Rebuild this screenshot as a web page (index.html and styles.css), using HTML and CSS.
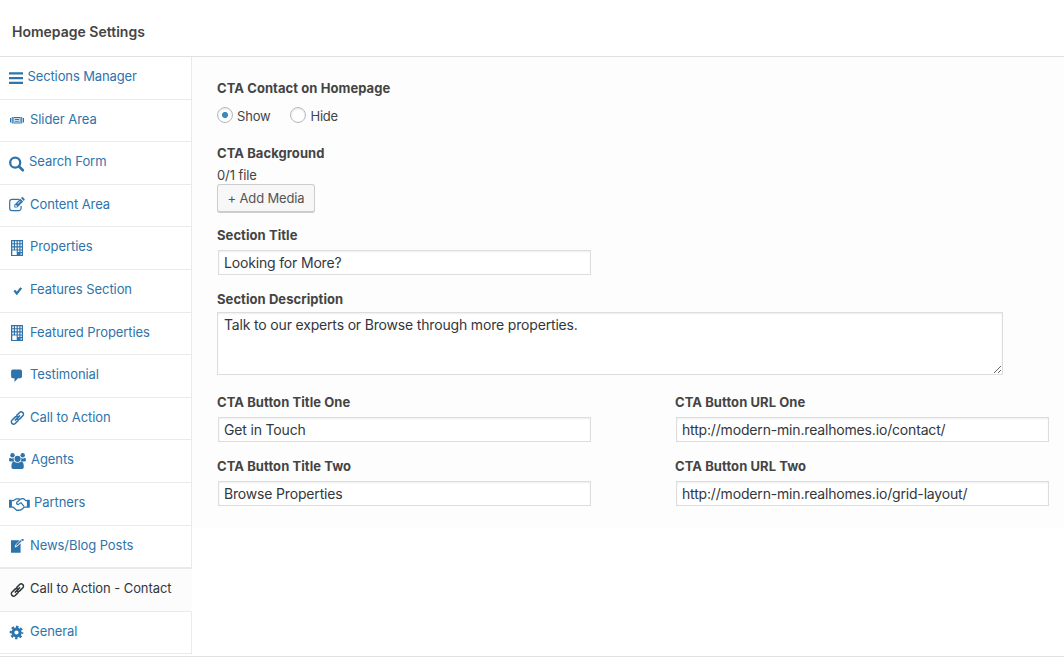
FILE: index.html
```html
<!DOCTYPE html>
<html lang="en">
<head>
<meta charset="utf-8">
<title>Homepage Settings</title>
<link rel="stylesheet" href="styles.css">
</head>
<body>
<svg class="defs" aria-hidden="true">
  <symbol id="link" viewBox="0 0 14 14"><g transform="rotate(-45 7 7)" fill="none" stroke="currentColor" stroke-width="1.500"><path d="M6.300 9.300H1.600Q-.6 9.300-.6 7t2.200-2.300h4Q7.900 4.700 7.900 7M7.700 4.700h4.700Q14.600 4.700 14.600 7t-2.200 2.300h-4Q6.100 9.300 6.100 7"/><path d="M3.300 7h7.400"/></g></symbol>
  <symbol id="building" viewBox="0 0 12 16"><path fill-rule="evenodd" d="M0 0h12v16H0zM1.300 1.200v2h1.500v-2zm2.700 0v2h1.600v-2zm2.800 0v2h1.500v-2zm2.700 0v2h1.300v-2zM1.300 4.300v2h1.500v-2zm2.700 0v2h1.600v-2zm2.800 0v2h1.500v-2zm2.700 0v2h1.300v-2zM1.300 7.400v2h1.500v-2zm2.700 0v2h1.600v-2zm2.800 0v2h1.500v-2zm2.700 0v2h1.300v-2zM1.300 10.500v4.400h4.400v-4.400zm5.500 0v1.600h1.500v-1.600zm2.700 0v1.600h1.300v-1.600zM9.500 13.200v1.600h1.300v-1.600z"/></symbol>
</svg>
<header class="header"><h1 class="title">Homepage Settings</h1></header>
<div class="body">
  <nav class="tabs">
    <a class="tab tall"><svg class="icon" width="28" height="22"><path d="M9 5.200h14v2.200H9zM9 9.900h14v2.300H9zM9 14.700h14V17H9z"/></svg><span class="s1">Sections Manager</span></a>
    <a class="tab"><svg class="icon" width="30" height="22"><path d="M10 8h1.200v4.500H10zM11.800 7h1v6.500h-1zM21.200 7h1v6.500h-1zM22.800 8H24v4.500h-1.200z"/><path fill-rule="evenodd" d="M13.400 7h7.200v6.500h-7.200zm.9 1v4.500h5.400V8z"/><path d="M15 8.800h4v1.100h-4zM15 10.700h4v1.100h-4z"/></svg><span>Slider Area</span></a>
    <a class="tab tall"><svg class="icon" width="29" height="22"><circle cx="15.200" cy="10.700" r="5" class="stroke" stroke-width="2.300"/><path d="M18.800 14.300l4 4" class="stroke" stroke-width="2.700" stroke-linecap="round"/></svg><span>Search Form</span></a>
    <a class="tab"><svg class="icon" width="30" height="22"><path d="M19.500 4.300H12a2.300 2.300 0 0 0-2.300 2.300v6.700A2.300 2.300 0 0 0 12 15.600h6.800a2.300 2.300 0 0 0 2.300-2.300V11" class="stroke" stroke-width="1.200"/><path fill-rule="evenodd" d="M14.300 9.700l6-6 2.900 2.900-6 6h-2.900zm1 .6v1.400h1.400l.5-.5-1.400-1.400zm2.200-1.800l.4.400 2.700-2.700-.4-.4zM21 3l.7-.7q.6-.4 1.200 0l1.600 1.600q.5.600 0 1.200l-.7.8z"/></svg><span>Content Area</span></a>
    <a class="tab tall"><svg class="icon" width="30" height="22"><use href="#building" x="11" y="3" width="12" height="16"/></svg><span>Properties</span></a>
    <a class="tab tall"><svg class="icon" width="30" height="22"><path d="M14.300 10.500l2.500 2.900 4.400-5.500" class="stroke" stroke-width="2.300"/></svg><span>Features Section</span></a>
    <a class="tab"><svg class="icon" width="30" height="22"><use href="#building" x="11" y="2" width="12" height="16"/></svg><span>Featured Properties</span></a>
    <a class="tab tall"><svg class="icon" width="30" height="22"><path d="M12.800 4.600h7.500q1.700 0 1.700 1.700v5.200q0 1.700-1.700 1.700H18L14.500 17v-3.800h-1.700q-1.700 0-1.700-1.700V6.300q0-1.700 1.700-1.700z"/></svg><span>Testimonial</span></a>
    <a class="tab"><svg class="icon" width="30" height="22"><use href="#link" x="10.400" y="3" width="14" height="14"/></svg><span>Call to Action</span></a>
    <a class="tab tall"><svg class="icon" width="31" height="22"><circle cx="12.500" cy="5.300" r="2.200"/><circle cx="22.700" cy="5.300" r="2.200"/><path d="M9 10.300q0-2.700 1.600-2.400 1.800 1 3.200.1-.4 2 .5 3.600h-3.600Q9 11.600 9 10.300zM26 10.300q0-2.700-1.600-2.400-1.800 1-3.200.1.400 2-.5 3.600h3.600q1.700 0 1.700-1.300z"/><circle cx="17.600" cy="8.800" r="3.100"/><path d="M11.400 16.500q0-4.800 2.600-5 3.600 2.700 7.200 0 2.600.2 2.600 5 0 2.600-2.500 2.600h-7.400q-2.500 0-2.500-2.600z"/></svg><span>Agents</span></a>
    <a class="tab tall"><svg class="icon" width="34" height="22"><path d="M9 6.800h2.900v8H9zM26.900 6.800h2.900v8h-2.900z"/><path d="M11.800 7.600h1.800L16 5.900h3l1 .6L22 5.700h1.700L25.800 7.600H27M11.800 14h1.300l3.500 3.200q.8.500 1.500-.2.900.9 1.800-.1 1 .4 1.700-.8 1.200.1 1.600-1.100l1-.9H27M20.300 6.300l-3.400 3q-.7 1.100.3 1.900 1.300.8 2.400-.7l1.300-.8 3.100 3.700" class="stroke" stroke-width="1.250" stroke-linejoin="round"/></svg><span>Partners</span></a>
    <a class="tab tall double"><svg class="icon" width="30" height="22"><path d="M11 4.200h8.800l-4.300 4.600-.8 2.700 2.600-.9 3.300-3.400v9.500H11z"/><path d="M16 10l.4-1.500 4.400-4.500 1 1-4.500 4.500zM21.200 3.600l.6-.5 1.800-.1v1.500l-.9.700z"/></svg><span>News/Blog Posts</span></a>
    <a class="tab tall active"><svg class="icon" width="30" height="22"><use href="#link" x="10.400" y="4" width="14" height="14"/></svg><span class="s2">Call to Action - Contact</span></a>
    <a class="tab"><svg class="icon" width="30" height="22"><circle cx="16.500" cy="10.500" r="3.600" class="stroke" stroke-width="3"/><circle cx="16.500" cy="10.500" r="5.700" class="stroke" stroke-width="2.200" stroke-dasharray="2.500 1.977" stroke-dashoffset="1.250"/></svg><span>General</span></a>
  </nav>
  <main class="panel">
    <section class="field toggles">
      <h2 class="label">CTA Contact on Homepage</h2>
      <div class="radios">
        <label class="radio"><i class="dot on"></i><span>Show</span></label>
        <label class="radio"><i class="dot"></i><span>Hide</span></label>
      </div>
    </section>
    <section class="field media">
      <h2 class="label">CTA Background</h2>
      <p class="count">0/1 file</p>
      <button class="button">+ Add Media</button>
    </section>
    <section class="field">
      <h2 class="label">Section Title</h2>
      <input class="input" value="Looking for More?">
    </section>
    <section class="field desc">
      <h2 class="label">Section Description</h2>
      <textarea class="area">Talk to our experts or Browse through more properties.</textarea>
    </section>
    <div class="grid">
      <section class="field"><h2 class="label">CTA Button Title One</h2><input class="input" value="Get in Touch"></section>
      <section class="field"><h2 class="label">CTA Button URL One</h2><input class="input" value="http://modern-min.realhomes.io/contact/"></section>
      <section class="field"><h2 class="label">CTA Button Title Two</h2><input class="input" value="Browse Properties"></section>
      <section class="field"><h2 class="label">CTA Button URL Two</h2><input class="input" value="http://modern-min.realhomes.io/grid-layout/"></section>
    </div>
  </main>
</div>
</body>
</html>
```

FILE: styles.css
```css
* { box-sizing: border-box; }
body {
  margin: 0;
  height: 657px;
  overflow: hidden;
  background: #fff;
  color: #444;
  font: 13px/16px Inter, "Liberation Sans", sans-serif;
}
.defs { display: none; }
.header {
  height: 57px;
  padding: 23px 12px 0;
  border-bottom: 1px solid #e1e1e1;
}
.title { margin: 0; font-size: 14px; line-height: 18px; font-weight: 600; }
.body {
  display: flex;
  align-items: flex-start;
  height: 600px;
  border-bottom: 1px solid #e1e1e1;
}
.tabs { width: 192px; flex: none; letter-spacing: -0.07px; }
.tab {
  display: flex;
  align-items: flex-start;
  height: 42px;
  border-right: 1px solid #eaeaea;
  border-bottom: 1px solid #eaeaea;
  color: #2e74ab;
  white-space: nowrap;
}
.tab span { margin-top: 11px; }
.tab .s1 { margin-left: -0.5px; letter-spacing: -0.12px; }
.tall { height: 43px; }
.double { border-bottom-width: 2px; }
.active { background: #fcfcfc; border-right-color: #fcfcfc; color: #32373c; }
.icon { flex: none; margin-top: 10px; fill: currentColor; }
.stroke { fill: none; stroke: currentColor; }
.panel {
  flex: 1;
  height: 471px;
  padding: 23px 15px 0 25px;
  background: #fdfdfd;
}
.field { display: flex; flex-direction: column; align-items: flex-start; height: 64px; }
.label { margin: 0 0 7px; font-size: 13px; line-height: 16px; font-weight: 700; letter-spacing: 0.07px; }
.toggles { height: 65px; }
.radios { display: flex; gap: 20px; margin-top: 4px; letter-spacing: -0.2px; }
.radio { display: flex; gap: 4px; line-height: 18px; }
.dot {
  width: 16px;
  height: 16px;
  border: 1px solid #b4b9be;
  border-radius: 50%;
  background: #fff;
  box-shadow: inset 0 1px 2px rgba(0,0,0,.1);
}
.on { background: radial-gradient(circle, #358cbb 0 2.700px, #fff 3.400px); }
.media { height: 82px; }
.count { margin: -1px 0 1px; letter-spacing: -0.1px; }
.button {
  width: 98px;
  height: 29px;
  padding: 0;
  border: 1px solid #ccc;
  border-bottom-width: 2px;
  border-radius: 3px;
  background: #f7f7f7;
  color: #555;
  font: inherit;
  letter-spacing: -0.15px;
}
.input, .area {
  border: 1px solid #ddd;
  background: #fff;
  color: #32373c;
  font: 14px/17px Inter, "Liberation Sans", sans-serif;
  letter-spacing: -0.17px;
  box-shadow: inset 0 1px 2px rgba(0,0,0,.07);
  outline: 0;
}
.input { width: 373px; height: 25px; margin: 0 0 0 1px; padding: 2px 5px; }
.desc { height: 103px; }
.desc .label { margin-bottom: 5px; }
.area { width: 786px; height: 63px; margin: 0; padding: 3px 6px; resize: both; }
.grid { display: grid; grid-template-columns: 458px 374px; }
```
